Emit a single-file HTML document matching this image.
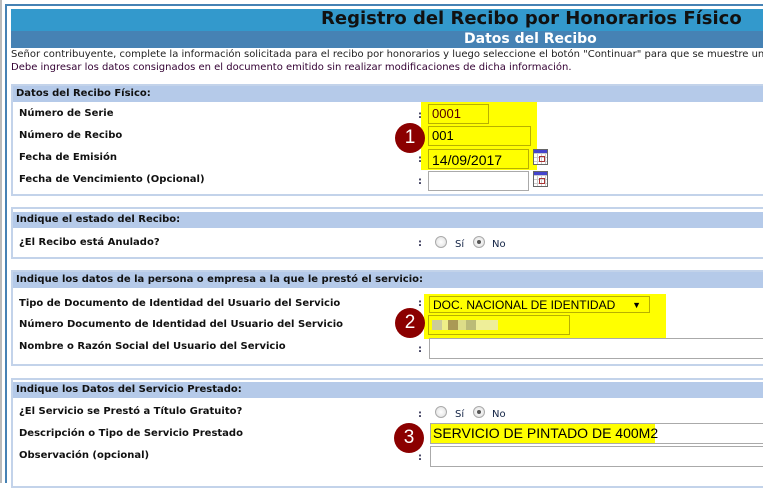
<!DOCTYPE html>
<html><head><meta charset="utf-8"><style>
*{margin:0;padding:0;box-sizing:border-box}
body{width:763px;height:483px;overflow:hidden;background:#fff;font-family:"DejaVu Sans",Verdana,sans-serif;position:relative}
.a{position:absolute}
.lbl{position:absolute;left:19px;font-size:10px;font-weight:bold;color:#111;white-space:nowrap}
.box{position:absolute;left:11px;width:760px;border:2px solid #c3d3ea;border-right:none}
.hd{position:absolute;left:13px;width:750px;height:16px;background:#b5cae9;font-size:10px;font-weight:bold;color:#111;padding:2px 0 0 3px;white-space:nowrap}
.col{position:absolute;left:418px;font-size:10px;font-weight:bold;color:#335}
.in{position:absolute;border:1px solid #aaa;background:#fff;font-family:"Liberation Sans",Arial,sans-serif;font-size:13px;color:#000;padding:1px 3px;line-height:16px}
.y{background:#ff0;border-color:#b8b000}
.num{position:absolute;width:30px;height:30px;border-radius:50%;background:#8b0000;color:#fff;font-family:"Liberation Sans",Arial,sans-serif;font-size:19px;text-align:center;line-height:30px}
.rad{position:absolute;width:12px;height:12px;border-radius:50%;border:1px solid #aaa;background:radial-gradient(#fff,#ddd)}
.rad.on::after{content:"";position:absolute;left:3px;top:3px;width:4px;height:4px;border-radius:50%;background:#555}
.rt{position:absolute;font-size:10px;color:#124}
.cal{position:absolute;width:15px;height:16px;border:1px solid #666;background:#fff;
background-image:linear-gradient(#44c 0 3px,transparent 3px),repeating-linear-gradient(90deg,transparent 0 3px,#ccc 3px 4px),repeating-linear-gradient(transparent 0 3px,#ccc 3px 4px)}
.cal::after{content:"";position:absolute;right:2px;top:6px;width:4px;height:4px;border:1px solid #a33}
</style></head><body>
<div class="a" style="left:0;top:0;width:2px;height:483px;background:#bbb"></div>
<div class="a" style="left:5px;top:4px;width:2px;height:479px;background:#4682b4"></div>
<div class="a" style="left:5px;top:4px;width:758px;height:2px;background:#4682b4"></div>
<div class="a" style="left:11px;top:9px;width:752px;height:22px;background:#3399cc"></div>
<div class="a" style="left:11px;top:31px;width:752px;height:17px;background:#4682b4"></div>
<div class="a" style="left:321px;top:8px;font-size:18px;font-weight:bold;color:#111;white-space:nowrap">Registro del Recibo por Honorarios Físico</div>
<div class="a" style="left:464px;top:31px;font-size:14px;font-weight:bold;color:#fff;white-space:nowrap">Datos del Recibo</div>
<div class="a" style="left:11px;top:48px;font-size:10px;color:#222;line-height:13px;white-space:nowrap">Señor contribuyente, complete la información solicitada para el recibo por honorarios y luego seleccione el botón "Continuar" para que se muestre un<br><span style="color:#303">Debe ingresar los datos consignados en el documento emitido sin realizar modificaciones de dicha información.</span></div>

<div class="box" style="top:84px;height:112px"></div>
<div class="hd" style="top:86px">Datos del Recibo Físico:</div>
<div class="lbl" style="top:108px">Número de Serie</div>
<div class="lbl" style="top:130px">Número de Recibo</div>
<div class="lbl" style="top:152px">Fecha de Emisión</div>
<div class="lbl" style="top:174px">Fecha de Vencimiento (Opcional)</div>
<div class="a" style="left:421px;top:102px;width:116px;height:68px;background:#ff0"></div>
<div class="col" style="top:110px">:</div><div class="col" style="top:154px">:</div><div class="col" style="top:176px">:</div>
<div class="in y" style="left:428px;top:104px;width:61px;height:20px;color:#500">0001</div>
<div class="in y" style="left:428px;top:126px;width:103px;height:20px">001</div>
<div class="in y" style="left:428px;top:149px;width:101px;height:20px;font-size:14px;padding-top:2px">14/09/2017</div>
<div class="cal" style="left:533px;top:149px"></div>
<div class="in" style="left:428px;top:171px;width:101px;height:20px"></div>
<div class="cal" style="left:533px;top:171px"></div>
<div class="num" style="left:395px;top:123px">1</div>

<div class="box" style="top:207px;height:52px"></div>
<div class="hd" style="top:212px">Indique el estado del Recibo:</div>
<div class="lbl" style="top:237px">¿El Recibo está Anulado?</div>
<div class="col" style="top:238px">:</div>
<div class="rad" style="left:435px;top:236px"></div><div class="rt" style="left:455px;top:239px">Sí</div>
<div class="rad on" style="left:473px;top:236px"></div><div class="rt" style="left:492px;top:239px">No</div>

<div class="box" style="top:270px;height:96px"></div>
<div class="hd" style="top:272px">Indique los datos de la persona o empresa a la que le prestó el servicio:</div>
<div class="lbl" style="top:298px">Tipo de Documento de Identidad del Usuario del Servicio</div>
<div class="lbl" style="top:319px">Número Documento de Identidad del Usuario del Servicio</div>
<div class="lbl" style="top:341px">Nombre o Razón Social del Usuario del Servicio</div>
<div class="a" style="left:424px;top:294px;width:242px;height:45px;background:#ff0"></div>
<div class="col" style="top:298px">:</div><div class="col" style="top:344px">:</div>
<div class="in y" style="left:429px;top:296px;width:221px;height:17px;font-size:12px;line-height:14px">DOC. NACIONAL DE IDENTIDAD<span style="position:absolute;right:8px;font-size:9px">▼</span></div>
<div class="in y" style="left:428px;top:315px;width:142px;height:20px"><span style="display:inline-block;margin-top:3px;width:66px;height:10px;background:linear-gradient(90deg,#cc9 0 10px,#ee8 10px 16px,#a95 16px 26px,#dd8 26px 34px,#bb7 34px 44px,#ee9 44px 66px)"></span></div>
<div class="in" style="left:429px;top:338px;width:340px;height:21px"></div>
<div class="num" style="left:395px;top:308px">2</div>

<div class="box" style="top:378px;height:110px"></div>
<div class="hd" style="top:382px">Indique los Datos del Servicio Prestado:</div>
<div class="lbl" style="top:406px">¿El Servicio se Prestó a Título Gratuito?</div>
<div class="lbl" style="top:428px">Descripción o Tipo de Servicio Prestado</div>
<div class="lbl" style="top:450px">Observación (opcional)</div>
<div class="col" style="top:409px">:</div><div class="col" style="top:452px">:</div>
<div class="rad" style="left:435px;top:406px"></div><div class="rt" style="left:455px;top:409px">Sí</div>
<div class="rad on" style="left:473px;top:406px"></div><div class="rt" style="left:492px;top:409px">No</div>
<div class="in" style="left:430px;top:423px;width:340px;height:21px"></div>
<div class="a" style="left:431px;top:424px;width:224px;height:19px;background:#ff0;font-family:'Liberation Sans',Arial,sans-serif;font-size:14px;line-height:19px;padding-left:2px;white-space:nowrap">SERVICIO DE PINTADO DE 400M2</div>
<div class="in" style="left:430px;top:446px;width:340px;height:21px"></div>
<div class="num" style="left:394px;top:423px">3</div>
</body></html>
